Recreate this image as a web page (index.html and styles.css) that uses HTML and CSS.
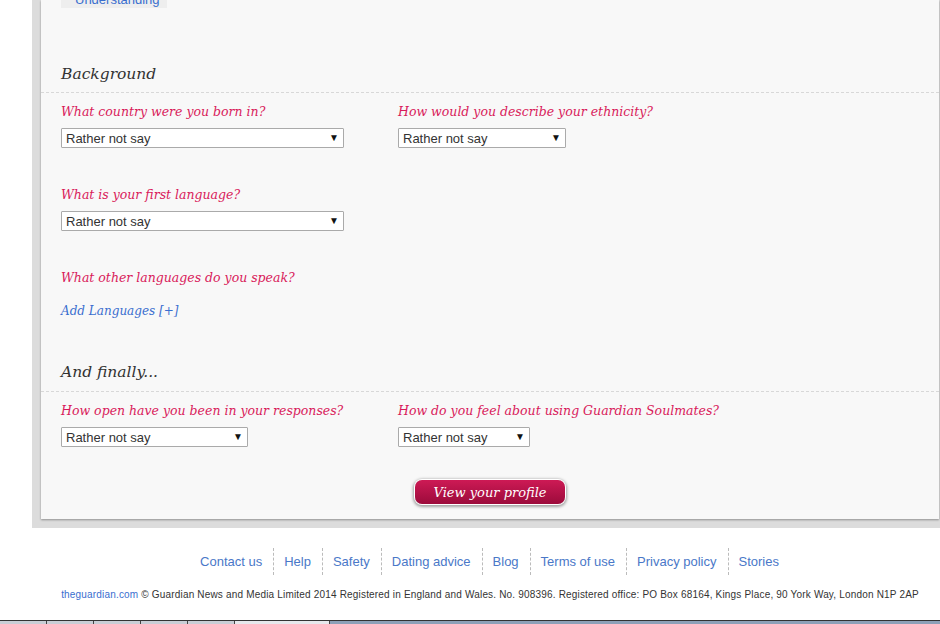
FILE: index.html
```html
<!DOCTYPE html>
<html lang="en">
<head>
  <meta charset="UTF-8">
  <title>Guardian Soulmates - Your profile</title>
  <link rel="stylesheet" href="styles.css">
</head>
<body>
  <div class="page">
    <div class="wrapper">
      <div class="panel">
        <div class="chip"><span>Understanding</span></div>

        <!-- Background -->
        <h2 class="section-title first">Background</h2>
        <div class="fields">
          <div class="row">
            <div class="field">
              <label>What country were you born in?</label>
              <div class="select wide"><select><option>Rather not say</option></select></div>
            </div>
            <div class="field">
              <label>How would you describe your ethnicity?</label>
              <div class="select mid"><select><option>Rather not say</option></select></div>
            </div>
          </div>
          <div class="row">
            <div class="field">
              <label>What is your first language?</label>
              <div class="select wide"><select><option>Rather not say</option></select></div>
            </div>
          </div>
          <div class="row">
            <div class="field">
              <label>What other languages do you speak?</label>
              <a href="#" class="add-link">Add Languages [+]</a>
            </div>
          </div>
        </div>

        <!-- And finally -->
        <h2 class="section-title">And finally...</h2>
        <div class="fields">
          <div class="row">
            <div class="field">
              <label>How open have you been in your responses?</label>
              <div class="select short"><select><option>Rather not say</option></select></div>
            </div>
            <div class="field">
              <label>How do you feel about using Guardian Soulmates?</label>
              <div class="select tiny"><select><option>Rather not say</option></select></div>
            </div>
          </div>
        </div>

        <div class="actions">
          <button class="profile-btn">View your profile</button>
        </div>
      </div>
    </div>

    <footer>
      <ul class="footer-links">
        <li><a href="#">Contact us</a></li>
        <li><a href="#">Help</a></li>
        <li><a href="#">Safety</a></li>
        <li><a href="#">Dating advice</a></li>
        <li><a href="#">Blog</a></li>
        <li><a href="#">Terms of use</a></li>
        <li><a href="#">Privacy policy</a></li>
        <li><a href="#">Stories</a></li>
      </ul>
      <p class="legal"><a href="#">theguardian.com</a> &copy; Guardian News and Media Limited 2014 Registered in England and Wales. No. 908396. Registered office: PO Box 68164, Kings Place, 90 York Way, London N1P 2AP</p>
    </footer>
  </div>

  <div class="taskbar">
    <span class="tab"></span><span class="tab"></span><span class="tab"></span><span class="tab"></span><span class="tab"></span><span class="tab wide-tab"></span><span class="tab rest"></span>
  </div>
</body>
</html>
```

FILE: styles.css
```css
body {
  margin: 0;
  background: #fff;
  font-family: 'Liberation Sans', Arial, sans-serif;
  color: #333;
  overflow: hidden;
}
.page {
  margin-left: 32px;
  width: 916px;
}
.wrapper {
  background: #dcdcdc;
  padding: 0 9px 9px 9px;
}
.panel {
  background: #f8f8f8;
  box-shadow: 0 1px 2px rgba(0, 0, 0, 0.35);
  padding-bottom: 15px;
}
.chip {
  margin-left: 20px;
  width: 106px;
  height: 8px;
  overflow: hidden;
  background: #eee;
}
.chip span {
  display: block;
  margin-top: -7px;
  padding-left: 14px;
  font-size: 13px;
  line-height: 14px;
  color: #3a6ecf;
}
.section-title {
  margin: 43px 0 0;
  padding: 0 20px 9px;
  font-family: 'DejaVu Serif', Georgia, serif;
  font-style: italic;
  font-weight: normal;
  font-size: 15.5px;
  line-height: 20px;
  color: #333;
  border-bottom: 1px dashed #d8d8d8;
}
.section-title.first {
  margin-top: 56px;
  padding-bottom: 8px;
}
.fields {
  padding: 0 20px;
}
.row {
  display: flex;
  margin-top: 11px;
}
.row + .row {
  margin-top: 39px;
}
.field {
  width: 337px;
}
label {
  display: block;
  font-family: 'DejaVu Serif', Georgia, serif;
  font-style: italic;
  font-size: 12.5px;
  line-height: 16px;
  color: #d81b5b;
  margin-bottom: 8px;
}
.select {
  position: relative;
  height: 20px;
}
.select select {
  appearance: none;
  -webkit-appearance: none;
  width: 100%;
  height: 20px;
  margin: 0;
  padding: 0 0 0 4px;
  border: 1px solid #aaa;
  border-radius: 1px;
  background: #fff;
  font-family: 'Liberation Sans', Arial, sans-serif;
  font-size: 13px;
  color: #333;
}
.select::after {
  content: "\25BC";
  position: absolute;
  right: 5px;
  top: 4px;
  font-size: 10px;
  line-height: 11px;
  color: #111;
  pointer-events: none;
}
.wide { width: 283px; }
.mid { width: 168px; }
.short { width: 187px; }
.tiny { width: 132px; }
.add-link {
  display: block;
  margin-top: 17px;
  font-family: 'DejaVu Serif', Georgia, serif;
  font-style: italic;
  font-size: 12px;
  line-height: 16px;
  color: #3a6ecf;
  text-decoration: none;
}
.actions {
  display: flex;
  justify-content: center;
  margin-top: 33px;
}
.profile-btn {
  width: 150px;
  height: 24px;
  border: none;
  border-radius: 7px;
  background: linear-gradient(#cd1a55, #9c0b3b);
  box-shadow: 0 0 0 1px #fff, 0 1px 3px 2px rgba(0, 0, 0, 0.35);
  font-family: 'DejaVu Serif', Georgia, serif;
  font-style: italic;
  font-size: 13px;
  color: #fff;
  padding: 0;
}
footer {
  text-align: center;
}
.footer-links {
  display: flex;
  justify-content: center;
  list-style: none;
  margin: 20px 0 0;
  padding: 0;
}
.footer-links li {
  padding: 4px 11px 4px 10px;
  border-left: 1px dashed #bbb;
  font-size: 13px;
  line-height: 19px;
}
.footer-links li:first-child {
  border-left: none;
}
.footer-links a {
  color: #4a78c8;
  text-decoration: none;
}
.legal {
  margin: 13px 0 0;
  font-size: 10px;
  line-height: 14px;
  color: #333;
  letter-spacing: 0.18px;
}
.legal a {
  color: #3a6ecf;
  text-decoration: none;
}
.taskbar {
  display: flex;
  margin-top: 18px;
  height: 3px;
  border-top: 1px solid #333;
  background: #7d8ea6;
}
.tab {
  width: 46px;
  border-right: 1px solid #444;
  background: #c9ced6;
}
.tab.wide-tab { width: 94px; background: #e6e8ec; }
.tab.rest { flex: 1; background: #8da0b8; border: none; }
```
